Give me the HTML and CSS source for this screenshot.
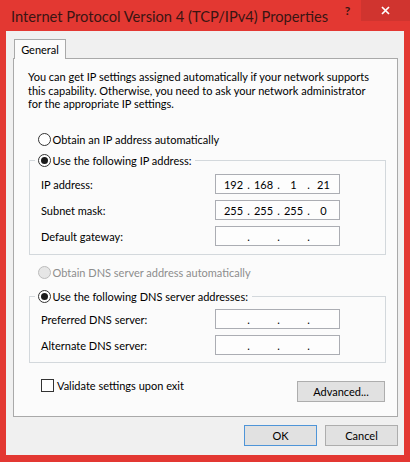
FILE: index.html
```html
<!DOCTYPE html>
<html lang="en">
<head>
<meta charset="utf-8">
<title>Internet Protocol Version 4 (TCP/IPv4) Properties</title>
<link rel="stylesheet" href="styles.css">
</head>
<body>
<div class="window">
  <div class="titlebar">
    <span class="title">Internet Protocol Version 4 (TCP/IPv4) Properties</span>
    <span class="help">?</span>
    <span class="close"><svg width="9" height="9" viewBox="0 0 9 9"><path d="M1 1 L8 8 M8 1 L1 8" stroke="#fff" stroke-width="1.7" fill="none"/></svg></span>
  </div>
  <div class="client">
    <div class="tabs"><div class="tab">General</div></div>
    <div class="panel">
      <p class="desc">You can get IP settings assigned automatically if your network supports<br>this capability. Otherwise, you need to ask your network administrator<br>for the appropriate IP settings.</p>

      <div class="opt opt-first"><span class="radio"></span>Obtain an IP address automatically</div>

      <fieldset class="group">
        <legend class="legend"><span class="radio checked"></span>Use the following IP address:</legend>
        <div class="grid">
          <span class="lbl">IP address:</span>
          <div class="ip"><span>192</span><i>.</i><span>168</span><i>.</i><span>1</span><i>.</i><span>21</span></div>
          <span class="lbl">Subnet mask:</span>
          <div class="ip"><span>255</span><i>.</i><span>255</span><i>.</i><span>255</span><i>.</i><span>0</span></div>
          <span class="lbl">Default gateway:</span>
          <div class="ip"><span></span><i>.</i><span></span><i>.</i><span></span><i>.</i><span></span></div>
        </div>
      </fieldset>

      <div class="opt opt-dns disabled"><span class="radio"></span>Obtain DNS server address automatically</div>

      <fieldset class="group group-dns">
        <legend class="legend"><span class="radio checked"></span>Use the following DNS server addresses:</legend>
        <div class="grid">
          <span class="lbl">Preferred DNS server:</span>
          <div class="ip"><span></span><i>.</i><span></span><i>.</i><span></span><i>.</i><span></span></div>
          <span class="lbl">Alternate DNS server:</span>
          <div class="ip"><span></span><i>.</i><span></span><i>.</i><span></span><i>.</i><span></span></div>
        </div>
      </fieldset>

      <div class="bottom-row">
        <div class="check-row"><span class="checkbox"></span>Validate settings upon exit</div>
        <button class="btn btn-adv">Advanced...</button>
      </div>
    </div>
    <div class="buttons">
      <button class="btn btn-ok">OK</button>
      <button class="btn">Cancel</button>
    </div>
  </div>
</div>
</body>
</html>
```
FILE: styles.css
```css
* { box-sizing: border-box; }

html, body {
  margin: 0;
  padding: 0;
}

body {
  width: 410px;
  height: 462px;
  font-family: "Lato", "Liberation Sans", sans-serif;
  font-size: 11px;
  color: #000;
  background: #e33832;
}

.window {
  width: 410px;
  height: 462px;
  display: flex;
  flex-direction: column;
  background: #e33832;
}

/* ---------- title bar ---------- */
.titlebar {
  height: 31px;
  display: flex;
  flex-shrink: 0;
}

.title {
  flex: 1;
  align-self: center;
  padding-left: 11px;
  font-size: 14.7px;
  color: #3a1512;
  white-space: nowrap;
}

.help {
  width: 27px;
  height: 21px;
  display: flex;
  align-items: center;
  justify-content: center;
  font-weight: bold;
  font-size: 12px;
  color: #3a1512;
}

.close {
  width: 49px;
  height: 21px;
  display: flex;
  align-items: center;
  justify-content: center;
  background: #d0342f;
}

/* ---------- client area ---------- */
.client {
  margin: 0 6px;
  height: 424px;
  background: #f0f0f0;
  padding: 8px 6px 0 7px;
  display: flex;
  flex-direction: column;
}

.tabs {
  display: flex;
  position: relative;
  z-index: 1;
}

.tab {
  margin-left: 1px;
  width: 52px;
  height: 20px;
  margin-bottom: -1px;
  border: 1px solid #a9a9a9;
  border-bottom: none;
  background: #fbfbfb;
  display: flex;
  align-items: center;
  justify-content: center;
  padding-bottom: 1px;
}

.panel {
  border: 1px solid #a9a9a9;
  background: #fbfbfb;
  display: flex;
  flex-direction: column;
  padding-bottom: 14px;
}

.desc {
  margin: 11px 0 0 14px;
  line-height: 13.5px;
  white-space: nowrap;
}

/* ---------- radio / check ---------- */
.opt {
  height: 16px;
  display: flex;
  align-items: center;
  padding-left: 24px;
}

.opt-first { margin-top: 20.5px; }
.opt-dns { margin-top: 9px; }

.disabled { color: #8d8d8d; }

.radio {
  width: 13px;
  height: 13px;
  border-radius: 50%;
  border: 1px solid #333;
  background: #fff;
  margin-right: 1.5px;
  display: flex;
  align-items: center;
  justify-content: center;
  flex-shrink: 0;
}

.radio.checked::after {
  content: "";
  width: 7px;
  height: 7px;
  border-radius: 50%;
  background: #1a1a1a;
}

.disabled .radio {
  border-color: #bcbcbc;
  background: #e6e6e6;
}

.checkbox {
  width: 13px;
  height: 13px;
  border: 1px solid #333;
  background: #fff;
  margin-right: 3px;
  flex-shrink: 0;
}

/* ---------- group boxes ---------- */
.group {
  margin: 5px 11px 0 15px;
  padding: 6px 10px 8px 11px;
  border: 1px solid #d3d8dc;
  min-width: 0;
}

.group-dns {
  margin-top: 8px;
  padding-top: 5px;
  padding-bottom: 7px;
}

.legend {
  height: 16px;
  display: flex;
  align-items: center;
  margin-left: -6px;
  padding: 0 4px 0 3px;
}

.grid {
  display: grid;
  grid-template-columns: 174px 125px;
  row-gap: 6px;
  align-items: center;
}

.ip {
  height: 20px;
  border: 1px solid #abadb3;
  background: #fdfdfd;
  display: flex;
  align-items: center;
  padding-left: 5px;
}

.ip span {
  width: 25px;
  text-align: center;
}

.ip i {
  width: 5px;
  font-style: normal;
  text-align: center;
}

/* ---------- bottom row ---------- */
.bottom-row {
  margin: 16px 12px 0 27px;
  display: flex;
  justify-content: space-between;
  align-items: flex-start;
}

.check-row {
  height: 13px;
  display: flex;
  align-items: center;
}

.btn {
  font-family: "Lato", "Liberation Sans", sans-serif;
  font-size: 11px;
  color: #000;
  height: 21px;
  width: 73px;
  border: 1px solid #adadad;
  background: #e1e1e1;
  padding: 0;
  margin: 0;
}

.btn-adv {
  width: 88px;
  margin-top: 2px;
}

.btn-ok {
  border-color: #4f95d8;
}

.buttons {
  margin-top: 8px;
  display: flex;
  justify-content: flex-end;
  gap: 8px;
}
```
